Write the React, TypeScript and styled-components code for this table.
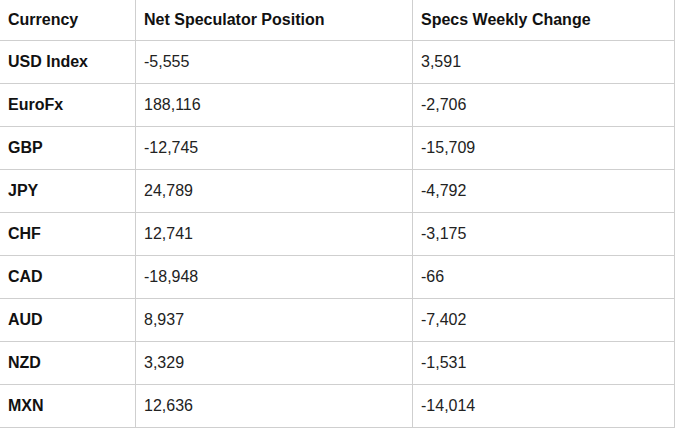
import React from "react";
import styled, { createGlobalStyle } from "styled-components";

const Global = createGlobalStyle`
  html, body { margin: 0; padding: 0; background: #ffffff; }
  body { font-family: "Liberation Sans", Arial, sans-serif; }
`;

const Table = styled.div`
  display: grid;
  grid-template-columns: 136px 277px 262px;
  width: 675px;
`;

const Cell = styled.div<{ $head?: boolean; $bold?: boolean }>`
  box-sizing: border-box;
  height: ${(p) => (p.$head ? 41 : 43)}px;
  display: flex;
  align-items: center;
  padding: 0 8px;
  border-right: 1px solid #cfcfcf;
  border-bottom: 1px solid #cfcfcf;
  font-size: 16px;
  font-weight: ${(p) => (p.$bold ? 700 : 400)};
  color: ${(p) => (p.$bold ? "#111" : "#222")};
  white-space: nowrap;
`;

const rows: [string, string, string][] = [
  ["USD Index", "-5,555", "3,591"],
  ["EuroFx", "188,116", "-2,706"],
  ["GBP", "-12,745", "-15,709"],
  ["JPY", "24,789", "-4,792"],
  ["CHF", "12,741", "-3,175"],
  ["CAD", "-18,948", "-66"],
  ["AUD", "8,937", "-7,402"],
  ["NZD", "3,329", "-1,531"],
  ["MXN", "12,636", "-14,014"],
];

export default function App() {
  return (
    <>
      <Global />
      <Table>
        <Cell $head $bold>Currency</Cell>
        <Cell $head $bold>Net Speculator Position</Cell>
        <Cell $head $bold>Specs Weekly Change</Cell>
        {rows.map(([c, n, s]) => (
          <React.Fragment key={c}>
            <Cell $bold>{c}</Cell>
            <Cell>{n}</Cell>
            <Cell>{s}</Cell>
          </React.Fragment>
        ))}
      </Table>
    </>
  );
}
